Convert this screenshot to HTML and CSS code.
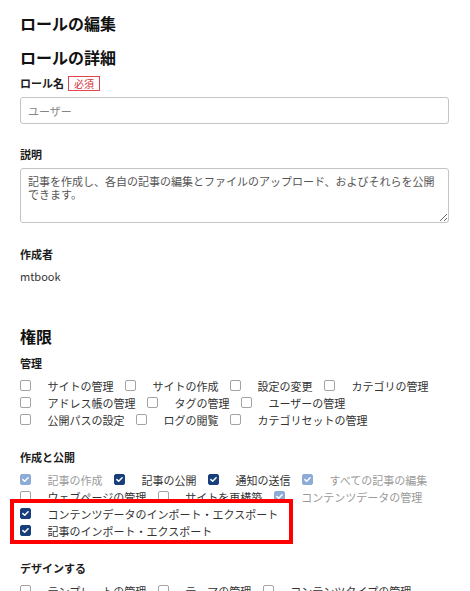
FILE: index.html
```html
<!DOCTYPE html>
<html lang="ja">
<head>
<meta charset="utf-8">
<title>ロールの編集</title>
<link rel="stylesheet" href="styles.css">
</head>
<body>
<div class="page">
  <h1 class="title">ロールの編集</h1>
  <h2 class="section-title">ロールの詳細</h2>

  <div class="name-row">
    <span class="field-label">ロール名</span>
    <span class="badge">必須</span>
  </div>
  <input class="text-input" type="text" placeholder="ユーザー">

  <div class="field-label desc-label">説明</div>
  <textarea class="text-area">記事を作成し、各自の記事の編集とファイルのアップロード、およびそれらを公開できます。</textarea>

  <div class="field-label author-label">作成者</div>
  <div class="value">mtbook</div>

  <h2 class="section-title perm-title">権限</h2>

  <div class="group first-group">
    <div class="field-label">管理</div>
    <div class="perm-list">
      <label class="perm"><span class="cb"></span><span>サイトの管理</span></label>
      <label class="perm"><span class="cb"></span><span>サイトの作成</span></label>
      <label class="perm"><span class="cb"></span><span>設定の変更</span></label>
      <label class="perm"><span class="cb"></span><span>カテゴリの管理</span></label>
      <label class="perm"><span class="cb"></span><span>アドレス帳の管理</span></label>
      <label class="perm"><span class="cb"></span><span>タグの管理</span></label>
      <label class="perm"><span class="cb"></span><span>ユーザーの管理</span></label>
      <label class="perm"><span class="cb"></span><span>公開パスの設定</span></label>
      <label class="perm"><span class="cb"></span><span>ログの閲覧</span></label>
      <label class="perm"><span class="cb"></span><span>カテゴリセットの管理</span></label>
    </div>
  </div>

  <div class="group">
    <div class="field-label">作成と公開</div>
    <div class="perm-list">
      <label class="perm disabled"><span class="cb on"><svg viewBox="0 0 11 11"><path d="M2.9 5.6 L4.7 7.3 L8.1 3.7"/></svg></span><span>記事の作成</span></label>
      <label class="perm"><span class="cb on"><svg viewBox="0 0 11 11"><path d="M2.9 5.6 L4.7 7.3 L8.1 3.7"/></svg></span><span>記事の公開</span></label>
      <label class="perm"><span class="cb on"><svg viewBox="0 0 11 11"><path d="M2.9 5.6 L4.7 7.3 L8.1 3.7"/></svg></span><span>通知の送信</span></label>
      <label class="perm disabled"><span class="cb on"><svg viewBox="0 0 11 11"><path d="M2.9 5.6 L4.7 7.3 L8.1 3.7"/></svg></span><span>すべての記事の編集</span></label>
      <label class="perm"><span class="cb"></span><span>ウェブページの管理</span></label>
      <label class="perm"><span class="cb"></span><span>サイトを再構築</span></label>
      <label class="perm disabled"><span class="cb on"><svg viewBox="0 0 11 11"><path d="M2.9 5.6 L4.7 7.3 L8.1 3.7"/></svg></span><span>コンテンツデータの管理</span></label>
      <label class="perm"><span class="cb on"><svg viewBox="0 0 11 11"><path d="M2.9 5.6 L4.7 7.3 L8.1 3.7"/></svg></span><span>コンテンツデータのインポート・エクスポート</span></label>
      <label class="perm"><span class="cb on"><svg viewBox="0 0 11 11"><path d="M2.9 5.6 L4.7 7.3 L8.1 3.7"/></svg></span><span>記事のインポート・エクスポート</span></label>
    </div>
  </div>

  <div class="group">
    <div class="field-label">デザインする</div>
    <div class="perm-list">
      <label class="perm"><span class="cb"></span><span>テンプレートの管理</span></label>
      <label class="perm"><span class="cb"></span><span>テーマの管理</span></label>
      <label class="perm"><span class="cb"></span><span>コンテンツタイプの管理</span></label>
    </div>
  </div>

  <div class="highlight"></div>
</div>
</body>
</html>
```

FILE: styles.css
```css
html, body {
  margin: 0;
  padding: 0;
  background: #ffffff;
  overflow: hidden;
}

body {
  font-family: "Noto Sans CJK JP", "Noto Sans", sans-serif;
  color: #222222;
}

.page {
  position: relative;
  padding: 13px 21px 0 20px;
  height: 591px;
  box-sizing: border-box;
}

.title,
.section-title {
  margin: 0;
  font-size: 16px;
  line-height: 20px;
  font-weight: 700;
  color: #111111;
}

.section-title {
  margin-top: 14px;
}

.perm-title {
  margin-top: 42px;
}

.field-label {
  display: block;
  font-size: 11px;
  line-height: 16px;
  font-weight: 700;
  color: #1c1c1c;
}

.name-row {
  display: flex;
  align-items: center;
  gap: 4px;
  height: 16px;
  margin-top: 8px;
}

.badge {
  font-size: 10px;
  line-height: 13px;
  padding: 0 5px;
  border: 1px solid #e0464c;
  color: #d2313a;
  font-weight: 400;
}

.text-input {
  display: block;
  box-sizing: border-box;
  width: 100%;
  height: 27px;
  margin: 6px 0 0;
  padding: 0 7px;
  border: 1px solid #c4c4c4;
  border-radius: 3px;
  font-family: inherit;
  font-size: 11px;
  color: #333333;
  background: #ffffff;
  outline: none;
}

.text-input::placeholder {
  color: #858585;
}

.desc-label {
  margin-top: 22px;
}

.text-area {
  display: block;
  box-sizing: border-box;
  width: 100%;
  height: 55px;
  margin: 6px 0 0;
  padding: 6px 7px;
  border: 1px solid #c4c4c4;
  border-radius: 3px;
  font-family: inherit;
  font-size: 11px;
  line-height: 13px;
  color: #555555;
  background: #ffffff;
  outline: none;
  overflow: hidden;
}

.author-label {
  margin-top: 23px;
}

.value {
  margin-top: 6px;
  font-size: 11px;
  line-height: 16px;
  color: #333333;
}

.first-group {
  margin-top: 9px;
}

.group + .group {
  margin-top: 21px;
}

.perm-list {
  display: flex;
  flex-wrap: wrap;
  margin-top: 6px;
}

.perm {
  display: flex;
  align-items: center;
  height: 17px;
  margin-right: 11.5px;
  font-size: 11px;
  color: #333333;
  white-space: nowrap;
}

.perm.disabled {
  color: #9a9a9a;
}

.cb {
  display: flex;
  align-items: center;
  justify-content: center;
  box-sizing: border-box;
  width: 11px;
  height: 11px;
  margin-right: 16.5px;
  border: 1px solid #a3a3a3;
  border-radius: 2px;
  background: #ffffff;
}

.cb svg {
  width: 11px;
  height: 11px;
  flex: none;
}

.cb svg path {
  fill: none;
  stroke: #ffffff;
  stroke-width: 1.5;
  stroke-linecap: round;
  stroke-linejoin: round;
}

.cb.on {
  background: #173f7c;
  border-color: #173f7c;
}

.disabled .cb.on {
  background: #8cabd7;
  border-color: #8cabd7;
}

.highlight {
  position: absolute;
  left: 10px;
  top: 499px;
  width: 283px;
  height: 45px;
  box-sizing: border-box;
  border: 4px solid #ff0000;
  pointer-events: none;
}
```
